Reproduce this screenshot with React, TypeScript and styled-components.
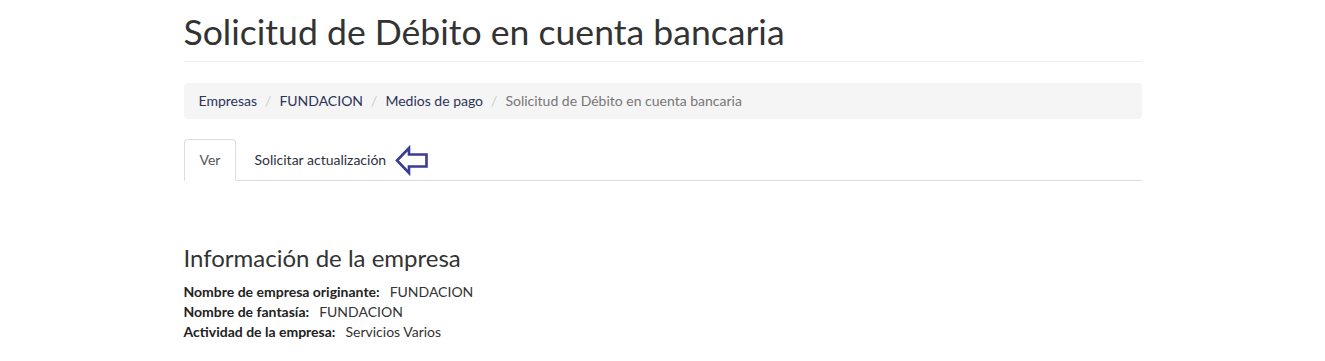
import React from "react";
import styled, { createGlobalStyle } from "styled-components";

const Global = createGlobalStyle`
  html, body { margin: 0; padding: 0; background: #fff; }
  body {
    font-family: Lato, "Open Sans", Arial, sans-serif;
    font-size: 14px;
    line-height: 20px;
    color: #333;
  }
`;

const Container = styled.div`
  width: 958px;
  margin: 0 auto;
`;

const PageHeader = styled.div`
  padding-bottom: 9px;
  border-bottom: 1px solid #eee;
  margin-bottom: 21px;
`;

const Title = styled.h1`
  margin: 12px 0 0;
  font-size: 35.6px;
  line-height: 40px;
  font-weight: 400;
  color: #333;
`;

const Breadcrumb = styled.ol`
  list-style: none;
  margin: 0 0 20px;
  padding: 8px 15px;
  background: #f5f5f5;
  border-radius: 4px;
  display: flex;
  align-items: center;
  & > li + li::before {
    content: "/";
    padding: 0 8px;
    color: #ccc;
  }
`;

const Crumb = styled.li<{ $active?: boolean }>`
  color: ${(p) => (p.$active ? "#777" : "#2c3457")};
`;

const Tabs = styled.ul`
  list-style: none;
  margin: 0;
  padding: 0;
  display: flex;
  align-items: flex-end;
  border-bottom: 1px solid #ddd;
`;

const Tab = styled.li<{ $active?: boolean }>`
  margin-bottom: -1px;
  margin-right: 2px;
  padding: 10px 15px;
  height: 20px;
  border: 1px solid ${(p) => (p.$active ? "#ddd" : "transparent")};
  border-bottom-color: ${(p) => (p.$active ? "#fff" : "transparent")};
  border-radius: 4px 4px 0 0;
  background: ${(p) => (p.$active ? "#fff" : "transparent")};
  color: ${(p) => (p.$active ? "#555" : "#2c3040")};
  display: flex;
  align-items: center;
`;

const ArrowWrap = styled.span`
  display: inline-flex;
  align-items: center;
  height: 20px;
  margin-left: 9px;
`;

const SectionTitle = styled.h3`
  margin: 63px 0 10px;
  font-size: 24px;
  line-height: 28px;
  font-weight: 400;
  color: #333;
`;

const InfoRow = styled.div`
  color: #333;
`;

const Label = styled.b`
  font-weight: 700;
  color: #222;
`;

const Value = styled.span`
  margin-left: 10px;
`;

const Arrow = () => (
  <svg width="34" height="31" viewBox="0 0 34 31" aria-hidden>
    <path
      d="M2 15.5 L14 3 L14 9.5 L31.5 9.5 L31.5 21.5 L14 21.5 L14 28 Z"
      fill="none"
      stroke="#3b3b94"
      strokeWidth="2.6"
      strokeLinejoin="miter"
    />
  </svg>
);

const rows: [string, string][] = [
  ["Nombre de empresa originante:", "FUNDACION"],
  ["Nombre de fantasía:", "FUNDACION"],
  ["Actividad de la empresa:", "Servicios Varios"],
];

export default function App() {
  return (
    <>
      <Global />
      <Container>
        <PageHeader>
          <Title>Solicitud de Débito en cuenta bancaria</Title>
        </PageHeader>
        <Breadcrumb>
          <Crumb>Empresas</Crumb>
          <Crumb>FUNDACION</Crumb>
          <Crumb>Medios de pago</Crumb>
          <Crumb $active>Solicitud de Débito en cuenta bancaria</Crumb>
        </Breadcrumb>
        <Tabs>
          <Tab $active>Ver</Tab>
          <Tab>
            Solicitar actualización
            <ArrowWrap>
              <Arrow />
            </ArrowWrap>
          </Tab>
        </Tabs>
        <SectionTitle>Información de la empresa</SectionTitle>
        {rows.map(([l, v]) => (
          <InfoRow key={l}>
            <Label>{l}</Label>
            <Value>{v}</Value>
          </InfoRow>
        ))}
      </Container>
    </>
  );
}
